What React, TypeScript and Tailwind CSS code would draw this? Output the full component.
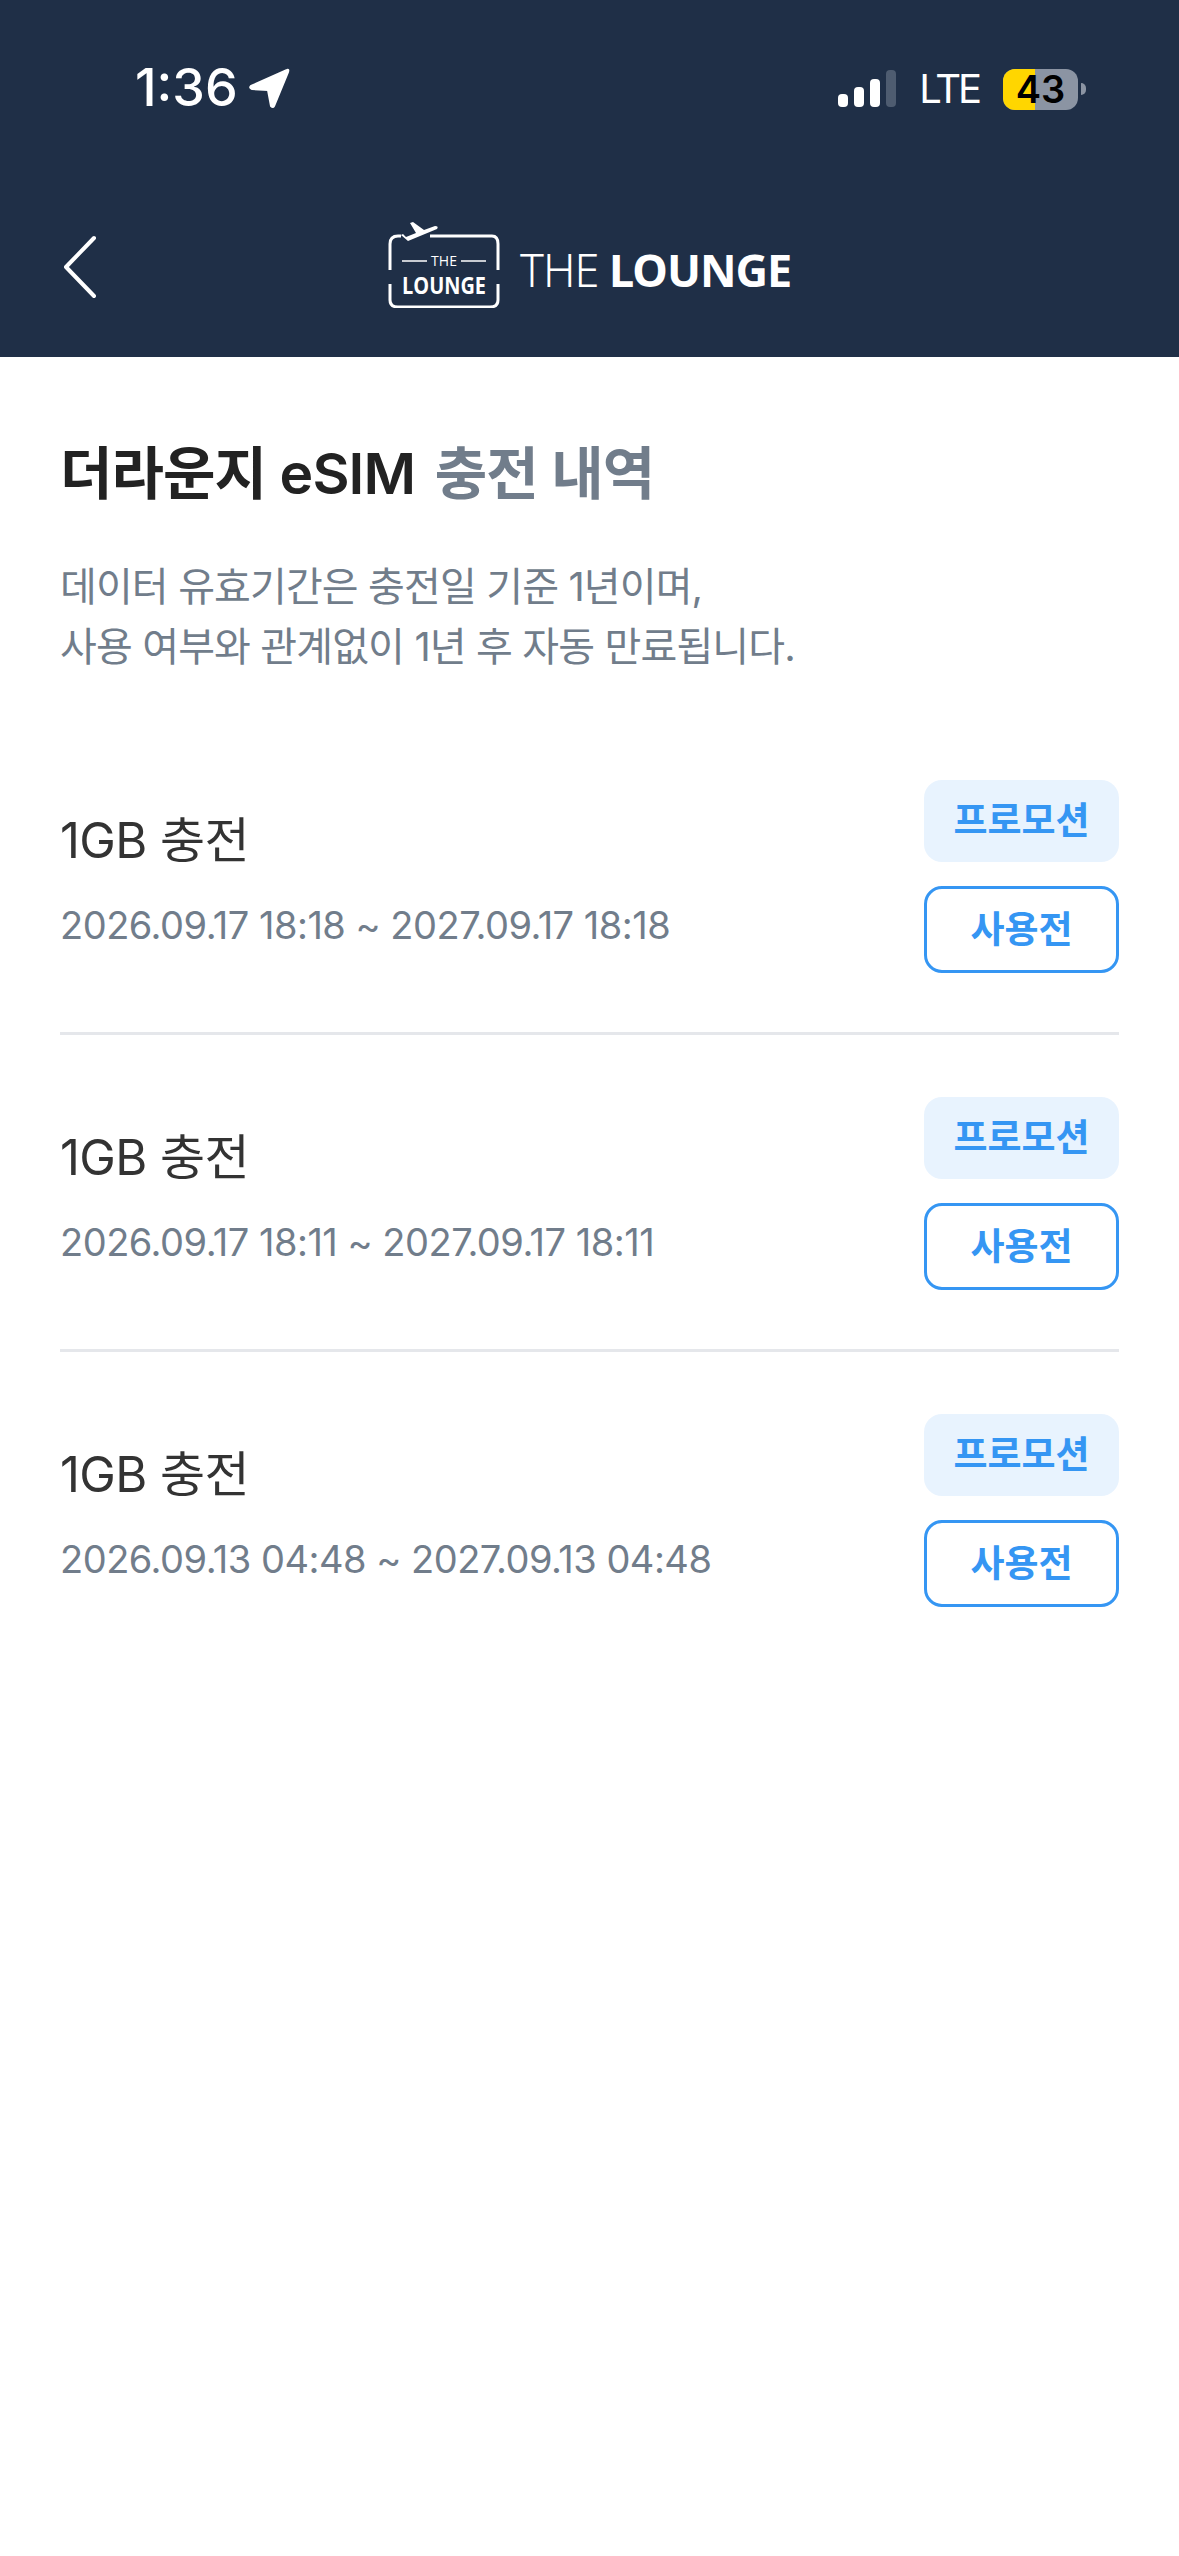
const items = [
  "2026.09.17 18:18 ~ 2027.09.17 18:18",
  "2026.09.17 18:11 ~ 2027.09.17 18:11",
  "2026.09.13 04:48 ~ 2027.09.13 04:48",
];

function Logo() {
  return (
    <svg width="112" height="86" viewBox="0 0 112 86" fill="none" className="shrink-0">
      <path d="M2 48V22Q2 14 10 14H13M42 14H104Q110 14 110 22V48M110 62V78Q110 85 102 85H10Q2 85 2 78V62" stroke="#fff" strokeWidth="3" />
      <path d="M13 13L20 19L49 7Q51 4 47 4L36 8L25 0L22 1L28 11L18 15L15 12Z" fill="#fff" />
      <path d="M14 39H39M73 39H98" stroke="#fff" strokeWidth="1.6" />
      <text x="56" y="44" textAnchor="middle" fill="#fff" fontSize="14" fontFamily="'Open Sans', sans-serif">THE</text>
      <text x="56" y="72" textAnchor="middle" fill="#fff" fontSize="23" fontWeight="700" fontFamily="'Open Sans', sans-serif" textLength="84" lengthAdjust="spacingAndGlyphs">LOUNGE</text>
    </svg>
  );
}

function Row({ date, last }: { date: string; last?: boolean }) {
  return (
    <div className={last ? "flex justify-between items-center pt-[62px]" : "flex justify-between items-center pt-[62px] pb-[59px] border-b-[3px] border-[#e5e7eb]"}>
      <div className="flex flex-col gap-[29px] pt-[7px]">
        <div className="text-[49px] leading-[60px] font-normal text-[#333] tracking-[-0.6px]">1GB 충전</div>
        <div className="text-[38px] leading-[50px] text-[#717d8b] tracking-[-0.5px]">{date}</div>
      </div>
      <div className="flex flex-col gap-[24px] w-[195px]">
        <div className="h-[82px] rounded-[18px] bg-[#e8f3fe] flex items-center justify-center text-[37px] font-semibold text-[#3596f3]">프로모션</div>
        <div className="h-[87px] rounded-[18px] border-[3px] border-[#3596f3] bg-white flex items-center justify-center text-[37px] font-semibold text-[#3596f3]">사용전</div>
      </div>
    </div>
  );
}

export default function App() {
  return (
    <div className="w-[1179px] h-[2556px] bg-white overflow-hidden font-['Inter','Noto_Sans_CJK_KR',sans-serif]">
      <header className="h-[357px] bg-[#1f2f47] text-white relative">
        <div className="flex justify-between items-center pl-[135px] pr-[93px] pt-[58px]">
          <div className="flex items-center gap-[10px]">
            <span className="text-[52px] leading-[60px] font-medium">1:36</span>
            <svg width="42" height="42" viewBox="0 0 42 42">
              <path d="M39 3L3 19Q1 21 4 22L20 23L23 39Q25 41 26 39L40 5Q41 2 39 3Z" fill="#fff" stroke="#fff" strokeWidth="2" strokeLinejoin="round" />
            </svg>
          </div>
          <div className="flex items-center pt-[2px]">
            <svg width="58" height="38" viewBox="0 0 58 38" className="mr-[23px]">
              <rect x="0" y="24" width="10" height="13" rx="4" fill="#fff" />
              <rect x="16" y="17" width="10" height="20" rx="4" fill="#fff" />
              <rect x="32" y="9" width="10" height="28" rx="4" fill="#fff" />
              <rect x="48" y="0" width="10" height="37" rx="4" fill="#4e5c70" />
            </svg>
            <span className="text-[40px] leading-[48px] font-normal mr-[24px] tracking-[-3px] font-['Inter',sans-serif]">LTE</span>
            <div className="relative w-[75px] h-[41px] rounded-[12px] bg-[#8b94a3] flex items-center justify-center">
              <div className="absolute left-0 top-0 bottom-0 w-[32px] rounded-l-[12px] bg-[#ffd600]" />
              <span className="relative text-[38px] leading-[41px] font-semibold text-black">43</span>
            </div>
            <div className="w-[5px] h-[12px] ml-[3px] rounded-r-full bg-[#8b94a3]" />
          </div>
        </div>
        <svg width="36" height="64" viewBox="0 0 36 64" className="absolute left-[62px] top-[235px]" fill="none">
          <path d="M32 3L4 32L32 61" stroke="#fff" strokeWidth="4" strokeLinecap="round" strokeLinejoin="round" />
        </svg>
        <div className="absolute left-[388px] top-[222px] flex items-center gap-[20px]">
          <Logo />
          <div className="text-[45px] leading-[50px] font-['Noto_Sans','Open_Sans',sans-serif] mt-[10px] whitespace-nowrap tracking-[-1px]">
            <span className="font-light">THE </span>
            <span className="font-bold">LOUNGE</span>
          </div>
        </div>
      </header>
      <main className="px-[60px]">
        <h1 className="pt-[82px] text-[57px] leading-[70px] font-semibold text-[#222] tracking-[-0.9px]">
          더라운지 eSIM <span className="text-[#717d8b] ml-[6px]">충전 내역</span>
        </h1>
        <p className="mt-[48px] text-[40px] leading-[60px] text-[#717d8b] tracking-[-0.88px]">
          데이터 유효기간은 충전일 기준 1년이며,
          <br />
          사용 여부와 관계없이 1년 후 자동 만료됩니다.
        </p>
        <div className="mt-[41px]">
          {items.map((d, i) => (
            <Row key={d} date={d} last={i === items.length - 1} />
          ))}
        </div>
      </main>
    </div>
  );
}
